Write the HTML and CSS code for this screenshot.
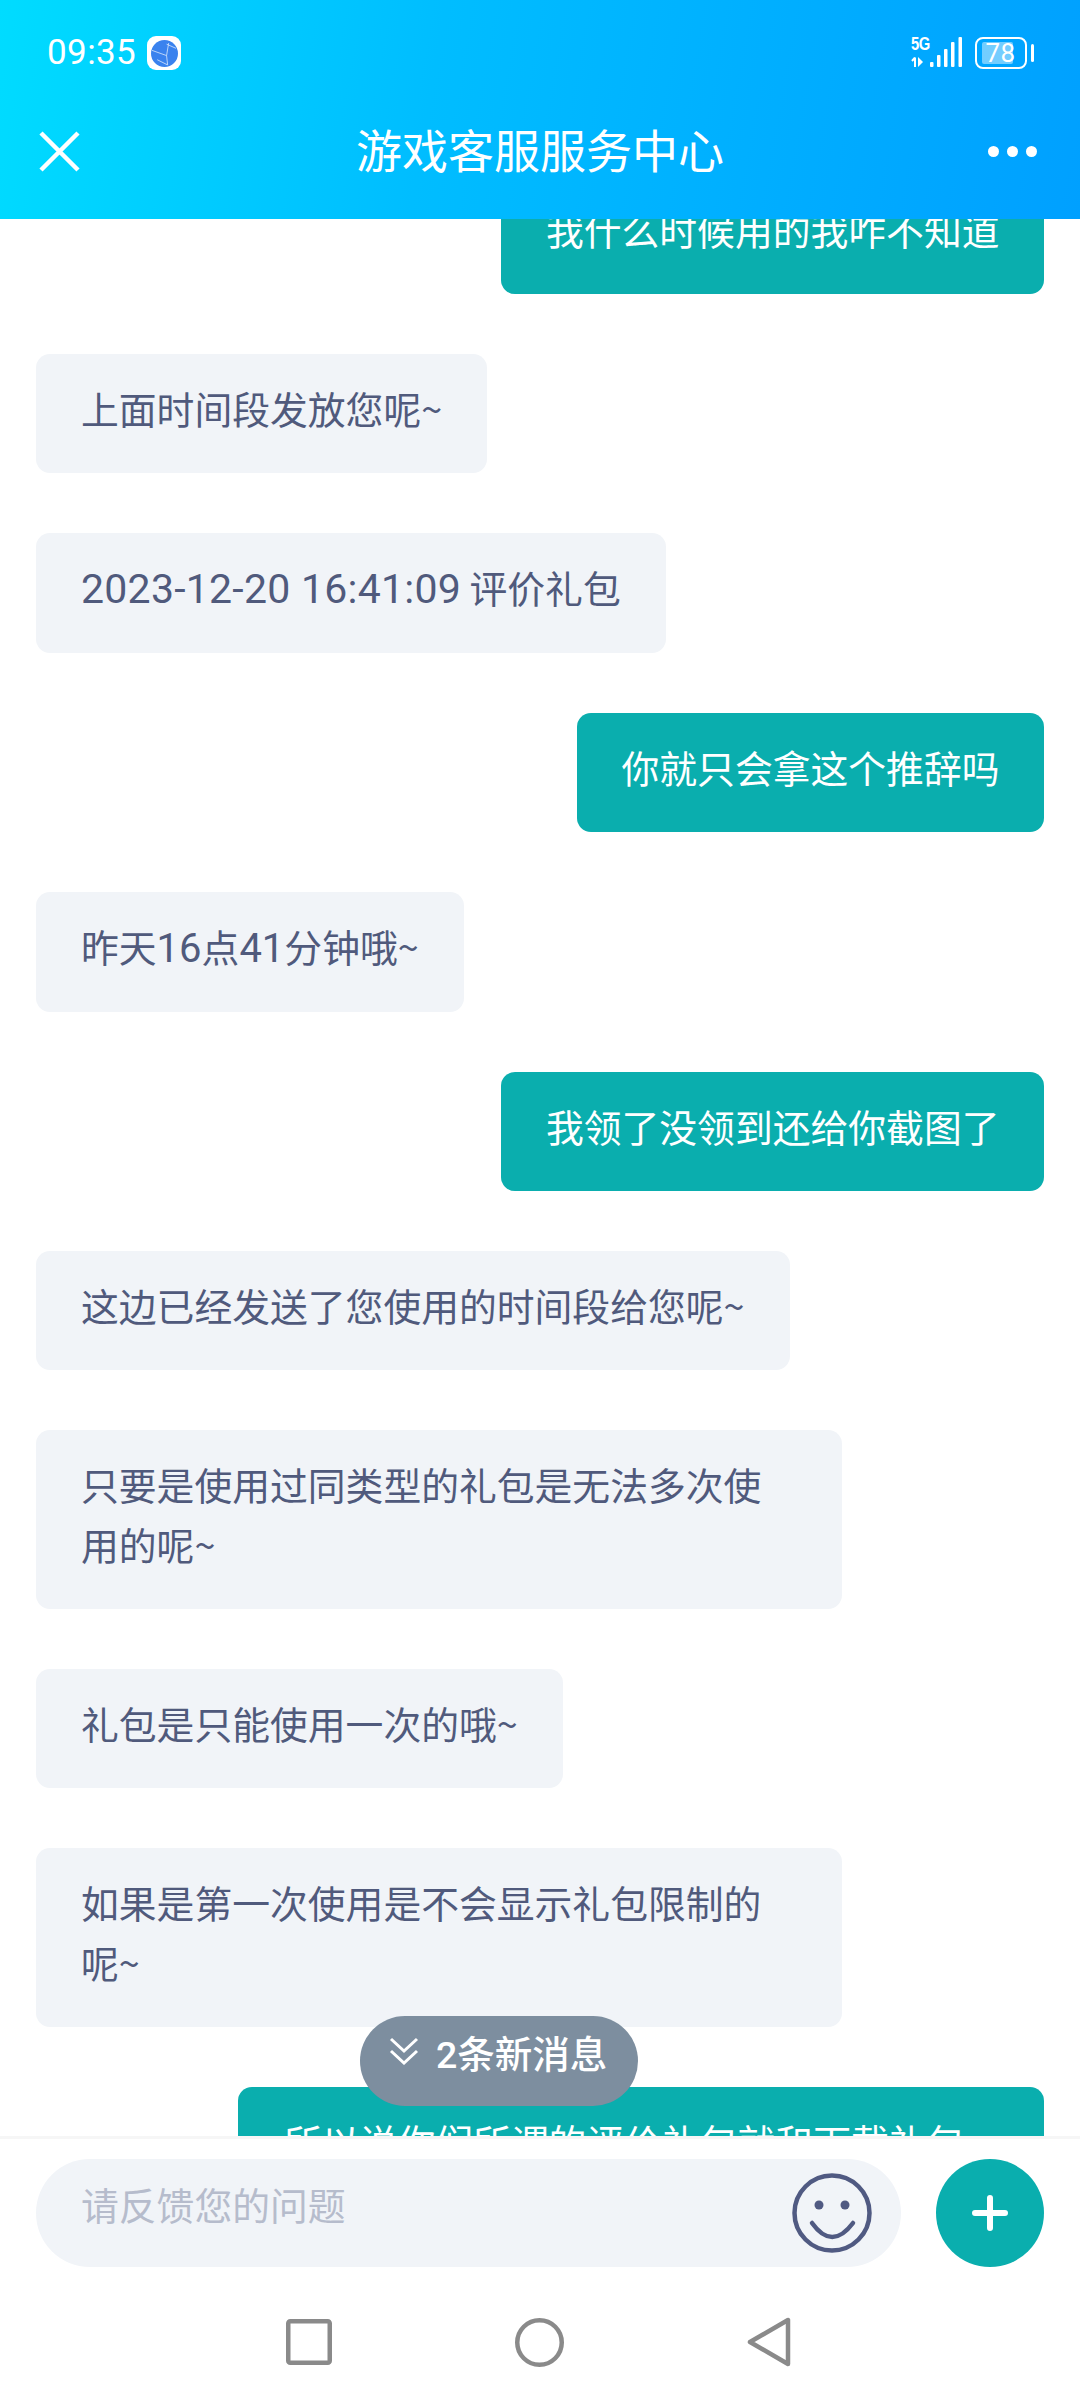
FILE: index.html
```html
<!DOCTYPE html>
<html lang="zh-CN">
<head>
<meta charset="utf-8">
<title>游戏客服服务中心</title>
<link rel="stylesheet" href="styles.css">
</head>
<body>
<div class="app">
  <header class="header">
    <div class="status">
      <div class="status-left">
        <span class="time">09:35</span>
        <span class="app-badge">
          <svg class="globe" viewBox="0 0 26 26" width="27" height="27">
            <circle cx="13" cy="13" r="13" fill="#3a82ee"/>
            <path d="M1 10L15 15L17 3M15 15L16 24M6 19L16 24M15 4L24 8" fill="none" stroke="#d5e4fb" stroke-width=".8"/>
          </svg>
        </span>
      </div>
      <div class="status-right">
        <div class="net">
          <span class="net-label">5G</span>
          <svg class="net-arrows" viewBox="0 0 16 10" width="16" height="10">
            <path d="M4 0.5V10M4 0.5L1 4" fill="none" stroke="#fff" stroke-width="2"/>
            <path d="M7 0L12 5L7 10Z" fill="#fff"/>
          </svg>
        </div>
        <svg class="signal" viewBox="0 0 32 30" width="32" height="30">
          <rect x="0" y="25" width="3.500" height="5" rx="1" fill="#fff"/>
          <rect x="7" y="18" width="3.500" height="12" rx="1" fill="#fff"/>
          <rect x="14" y="12" width="3.500" height="18" rx="1" fill="#fff"/>
          <rect x="21" y="5" width="3.500" height="25" rx="1" fill="#fff"/>
          <rect x="28.500" y="0" width="3.500" height="30" rx="1" fill="#fff"/>
        </svg>
        <div class="battery">
          <span class="battery-fill"></span>
          <span class="battery-num">78</span>
        </div>
        <span class="battery-nub"></span>
      </div>
    </div>
    <div class="nav">
      <svg class="close" viewBox="0 0 41 41" width="41" height="41">
        <path d="M2 2L39 39M39 2L2 39" fill="none" stroke="#fff" stroke-width="4.500"/>
      </svg>
      <h1 class="title">游戏客服服务中心</h1>
      <div class="dots"><i></i><i></i><i></i></div>
    </div>
  </header>

  <main class="chat">
    <div class="list">
      <div class="msg me">我什么时候用的我咋不知道</div>
      <div class="msg">上面时间段发放您呢~</div>
      <div class="msg"><span class="num date">2023-12-20 16:41:09</span> 评价礼包</div>
      <div class="msg me">你就只会拿这个推辞吗</div>
      <div class="msg">昨天<span class="num short">16</span>点<span class="num short">41</span>分钟哦~</div>
      <div class="msg me">我领了没领到还给你截图了</div>
      <div class="msg">这边已经发送了您使用的时间段给您呢~</div>
      <div class="msg">只要是使用过同类型的礼包是无法多次使用的呢~</div>
      <div class="msg">礼包是只能使用一次的哦~</div>
      <div class="msg">如果是第一次使用是不会显示礼包限制的呢~</div>
      <div class="msg me wide">所以说你们所谓的评价礼包就和下载礼包</div>
    </div>
  </main>

  <div class="new-badge">
    <svg class="chev" viewBox="0 0 30 28" width="30" height="28">
      <path d="M2 2L15 14L28 2M2 14L15 26L28 14" fill="none" stroke="#fff" stroke-width="3"/>
    </svg>
    <span class="new-text"><span class="new-num">2</span>条新消息</span>
  </div>

  <div class="composer">
    <div class="input">
      <span class="placeholder">请反馈您的问题</span>
      <svg class="smile" viewBox="0 0 80 80" width="80" height="80">
        <circle cx="40" cy="40" r="37.500" fill="none" stroke="#505a82" stroke-width="4.500"/>
        <circle cx="27" cy="32" r="4.500" fill="#505a82"/>
        <circle cx="53" cy="32" r="4.500" fill="#505a82"/>
        <path d="M20 50Q40 78 61 50" fill="none" stroke="#505a82" stroke-width="4.500" stroke-linecap="round"/>
      </svg>
    </div>
    <div class="plus">
      <svg viewBox="0 0 36 36" width="36" height="36">
        <path d="M3 18H33M18 3V33" fill="none" stroke="#fff" stroke-width="6" stroke-linecap="round"/>
      </svg>
    </div>
  </div>

  <div class="sysnav">
    <svg viewBox="0 0 46 46" width="46" height="46">
      <rect x="2.250" y="2.250" width="41.500" height="41.500" rx="2" fill="none" stroke="#8a8a8a" stroke-width="4.500"/>
    </svg>
    <svg viewBox="0 0 49 49" width="49" height="49">
      <circle cx="24.500" cy="24.500" r="22.250" fill="none" stroke="#8a8a8a" stroke-width="4.500"/>
    </svg>
    <svg viewBox="0 0 44 50" width="44" height="50">
      <path d="M41 3V47L3 25Z" fill="none" stroke="#8a8a8a" stroke-width="4.500" stroke-linejoin="round"/>
    </svg>
  </div>
</div>
</body>
</html>
```

FILE: styles.css
```css
* { box-sizing: border-box; }
html, body { margin: 0; padding: 0; background: #fff; }
body { font-family: "Noto Sans CJK SC", "Noto Sans", sans-serif; }

.app {
  position: relative;
  width: 1080px;
  height: 2400px;
  display: flex;
  flex-direction: column;
  overflow: hidden;
}

/* Header */
.header {
  flex: none;
  height: 219px;
  position: relative;
  z-index: 2;
  background: linear-gradient(100deg, #00dcff 0%, #00bdff 40%, #00a0ff 100%);
  color: #fff;
  padding: 36px 0 0;
}
.status {
  height: 34px;
  display: flex;
  justify-content: space-between;
  align-items: center;
  padding: 0 46px 0 47px;
}
.status-left { display: flex; align-items: center; gap: 11px; }
.time {
  font-family: Roboto, sans-serif;
  font-size: 35px;
  line-height: 34px;
  letter-spacing: .4px;
}
.app-badge {
  width: 34px;
  height: 34px;
  border-radius: 9px;
  background: #fff;
  display: flex;
  align-items: center;
  justify-content: center;
}
.status-right { display: flex; align-items: flex-start; height: 32px; }
.net {
  width: 18px;
  height: 30px;
  display: flex;
  flex-direction: column;
  justify-content: space-between;
  margin-right: 1px;
}
.net-label {
  font-family: "Liberation Sans", sans-serif;
  font-weight: 700;
  font-size: 18px;
  line-height: 14px;
  letter-spacing: -.5px;
  transform: scaleX(.82);
  transform-origin: left;
}
.signal { margin-right: 13px; }
.battery {
  position: relative;
  width: 52px;
  height: 32px;
  border: 2.500px solid #fff;
  border-radius: 8px;
  display: flex;
  align-items: center;
  justify-content: center;
}
.battery-fill {
  position: absolute;
  left: 5px;
  top: 3px;
  bottom: 3px;
  width: 31px;
  background: rgba(255, 255, 255, .45);
  border-radius: 2px;
}
.battery-num {
  position: relative;
  font-family: Roboto, sans-serif;
  font-size: 26px;
  line-height: 28px;
  letter-spacing: .5px;
}
.battery-nub {
  width: 3.500px;
  height: 18px;
  margin: 7px 0 0 4px;
  background: #fff;
  border-radius: 2px;
}
.nav {
  height: 149px;
  display: flex;
  align-items: flex-start;
  position: relative;
  padding: 61px 43px 0 39px;
  justify-content: space-between;
}
.title {
  position: absolute;
  left: 0;
  right: 0;
  top: 47px;
  margin: 0;
  text-align: center;
  font-size: 46px;
  line-height: 62px;
  font-weight: 400;
}
.dots { display: flex; gap: 8px; margin-top: 15px; }
.dots i {
  display: block;
  width: 11px;
  height: 11px;
  border-radius: 50%;
  background: #fff;
}

/* Chat */
.chat { flex: 1; min-height: 0; overflow: hidden; }
.list {
  display: flex;
  flex-direction: column;
  gap: 60px;
  padding: 0 36px;
  margin-top: -44.400px;
}
.msg {
  align-self: flex-start;
  max-width: 806px;
  padding: 24px 45px 36.200px;
  border-radius: 14px;
  background: #f1f4f8;
  color: #505a7c;
  font-size: 37.800px;
  line-height: 59.200px;
}
.msg.me {
  align-self: flex-end;
  padding-left: 44.500px;
  padding-right: 44.500px;
  background: #0aaeae;
  color: #fff;
}
.msg.wide { width: 806px; padding-left: 46px; }
.num { font-family: Roboto, sans-serif; line-height: 0; }
.date { font-size: 41px; letter-spacing: .25px; }
.short { font-size: 40px; }

/* Floating new-message badge */
.new-badge {
  position: absolute;
  left: 360px;
  top: 2016px;
  width: 278px;
  height: 90px;
  border-radius: 45px;
  background: #7d8e9f;
  color: #fff;
  display: flex;
  align-items: flex-start;
  gap: 17px;
  padding: 20px 0 0 29px;
  z-index: 1;
}
.chev { margin-top: 1px; }
.new-text { font-size: 37.500px; line-height: 40px; font-weight: 500; margin-top: -4px; }
.new-num { font-family: Roboto, sans-serif; font-weight: 500; }

/* Composer */
.composer {
  flex: none;
  height: 131px;
  background: #fff;
  border-top: 3px solid #f6f6f6;
  padding: 20px 36px 0;
  display: flex;
  justify-content: space-between;
  align-items: flex-start;
}
.input {
  width: 865px;
  height: 108px;
  border-radius: 54px;
  background: #f1f4f8;
  display: flex;
  align-items: center;
  justify-content: space-between;
  padding: 0 29px 0 45px;
}
.placeholder { font-size: 37.800px; line-height: 50px; color: #b6bccc; margin-top: -18px; }
.plus {
  width: 108px;
  height: 108px;
  border-radius: 50%;
  background: #0aaeae;
  display: flex;
  align-items: center;
  justify-content: center;
}

/* System nav */
.sysnav {
  flex: none;
  height: 133px;
  padding: 50px 3px 33px 0;
  display: flex;
  justify-content: center;
  align-items: center;
  gap: 183px;
  background: #fff;
}
```
